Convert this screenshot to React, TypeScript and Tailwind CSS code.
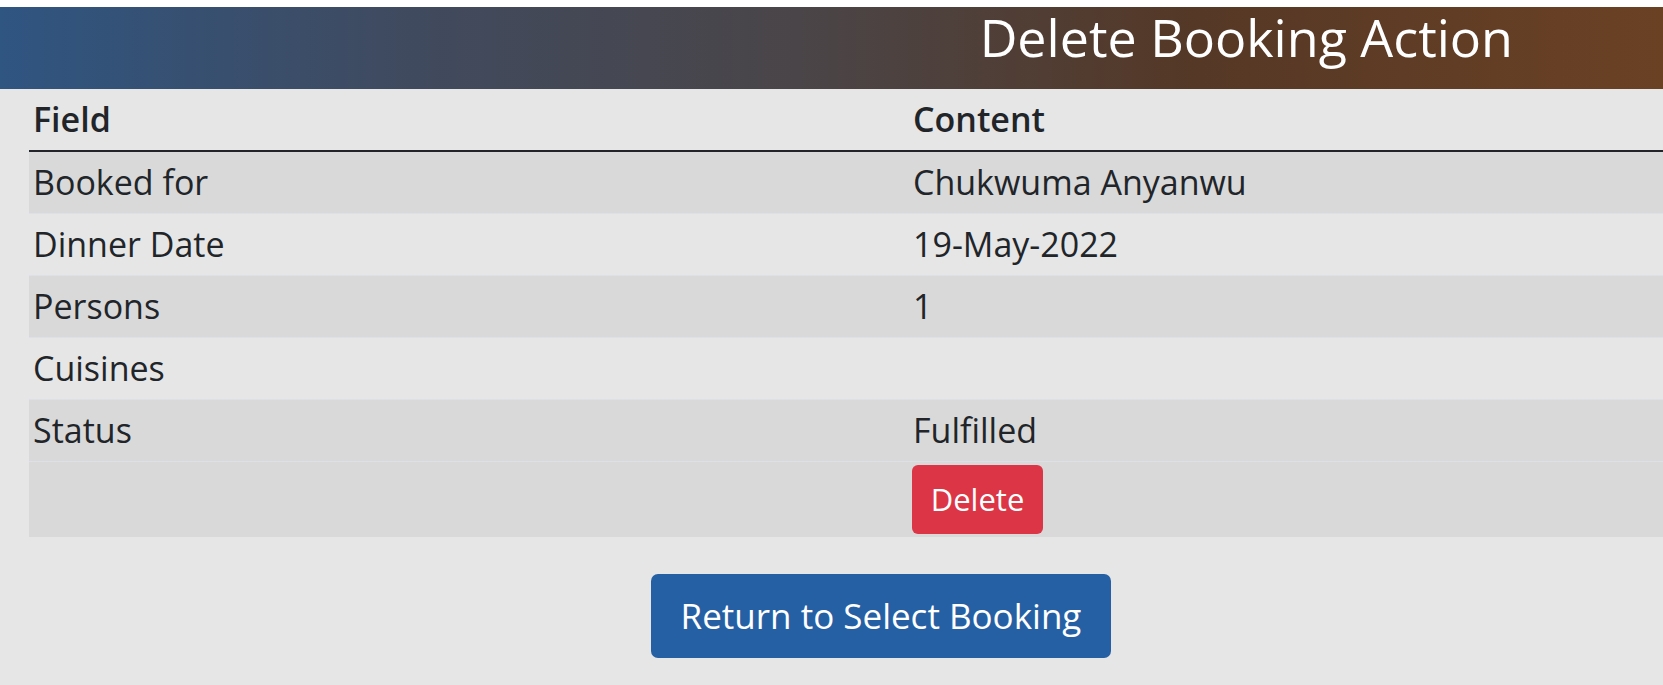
const rows = [
  { field: 'Booked for', content: 'Chukwuma Anyanwu' },
  { field: 'Dinner Date', content: '19-May-2022' },
  { field: 'Persons', content: '1' },
  { field: 'Cuisines', content: '' },
  { field: 'Status', content: 'Fulfilled' },
];

export default function App() {
  return (
    <div className="min-h-[685px] bg-[#e6e6e6] text-[#212529] font-['Open_Sans',sans-serif] overflow-hidden">
      {/* top strip */}
      <div className="h-[7px] bg-white" />

      {/* Banner */}
      <div className="h-[82px] flex justify-end pr-[150px] pt-[4px] bg-[linear-gradient(to_right,#2f5581_0%,#404a5e_25%,#4a4548_48%,#553826_72%,#6b4124_100%)]">
        <h1 className="text-[52px] leading-none font-normal text-white whitespace-nowrap">Delete Booking Action</h1>
      </div>

      {/* Details table */}
      <div className="ml-[29px]">
        <div className="flex h-[63px] border-b-2 border-[#212529] items-center">
          <div className="w-[880px] pl-[4px] text-[34px] font-semibold">Field</div>
          <div className="flex-1 pl-[4px] text-[34px] font-semibold">Content</div>
        </div>
        {rows.map((r, i) => (
          <div
            key={r.field}
            className={`flex h-[62px] items-center border-b border-[#dde1e6] ${i % 2 === 0 ? 'bg-[#d9d9d9]' : 'bg-[#e6e6e6]'}`}
          >
            <div className="w-[880px] pl-[4px] text-[34px]">{r.field}</div>
            <div className="flex-1 pl-[4px] text-[34px]">{r.content}</div>
          </div>
        ))}
        <div className="flex h-[75px] items-center bg-[#d9d9d9]">
          <div className="w-[880px]" />
          <div className="flex-1 pl-[3px]">
            <button className="h-[69px] w-[131px] rounded-[6px] bg-[#dc3545] text-white text-[31px]">Delete</button>
          </div>
        </div>
      </div>

      {/* Return */}
      <div className="flex justify-center pl-[99px] mt-[37px]">
        <button className="h-[84px] w-[460px] rounded-[7px] bg-[#2660a4] text-white text-[35px]">
          Return to Select Booking
        </button>
      </div>
    </div>
  );
}
